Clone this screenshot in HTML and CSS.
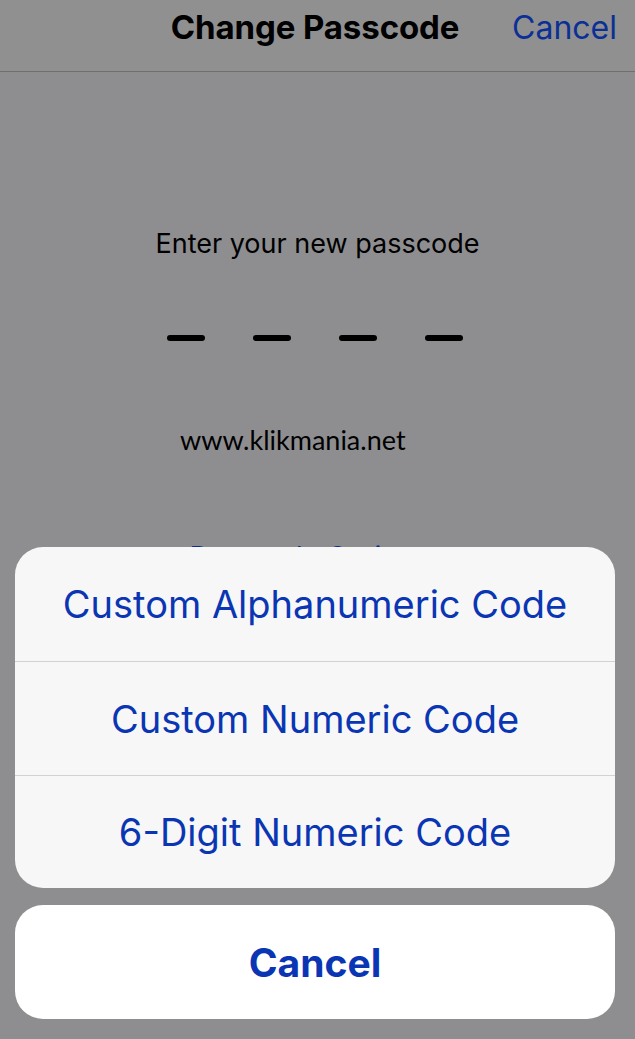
FILE: index.html
```html
<!DOCTYPE html>
<html>
<head>
<meta charset="utf-8">
<link rel="stylesheet" href="styles.css">
</head>
<body>
<div class="screen">
  <header class="navbar">
    <span></span>
    <h1 class="title">Change Passcode</h1>
    <a class="nav-cancel">Cancel</a>
  </header>
  <main class="content">
    <p class="prompt">Enter your new passcode</p>
    <div class="dashes">
      <span class="dash"></span><span class="dash"></span><span class="dash"></span><span class="dash"></span>
    </div>
    <p class="watermark">www.klikmania.net</p>
    <p class="options-link">Passcode Options</p>
  </main>
  <div class="sheet">
    <div class="sheet-group">
      <div class="sheet-item">Custom Alphanumeric Code</div>
      <div class="sheet-item">Custom Numeric Code</div>
      <div class="sheet-item">6-Digit Numeric Code</div>
    </div>
    <div class="sheet-cancel">Cancel</div>
  </div>
</div>
</body>
</html>
```
FILE: styles.css
```css
html, body {
  margin: 0;
  padding: 0;
  background: #8e8e90;
}
.screen {
  position: relative;
  width: 635px;
  height: 1039px;
  overflow: hidden;
  font-family: Inter, Roboto, "Liberation Sans", sans-serif;
}
.navbar {
  height: 72px;
  border-bottom: 1px solid #6f6f70;
  background: #909091;
  display: grid;
  grid-template-columns: 1fr auto 1fr;
  align-items: center;
  box-sizing: border-box;
  padding: 0 5px 17px 0;
}
.title {
  margin: 0;
  font-size: 33px;
  font-weight: 700;
  color: #000;
  letter-spacing: -0.1px;
}
.nav-cancel {
  justify-self: end;
  margin-right: 13px;
  font-size: 32px;
  color: #0b2f95;
}
.content {
  display: flex;
  flex-direction: column;
  align-items: center;
}
.prompt {
  margin: 155px 0 0;
  font-size: 27px;
  line-height: 34px;
  color: #000;
}
.dashes {
  display: flex;
  gap: 48px;
  margin-top: 74px;
  padding-right: 5px;
}
.dash {
  width: 38px;
  height: 6px;
  border-radius: 3px;
  background: #000;
}
.watermark {
  align-self: flex-start;
  margin: 82px 0 0 180px;
  font-family: Lato, "Open Sans", sans-serif;
  font-size: 27px;
  line-height: 34px;
  color: #000;
}
.options-link {
  margin: 83px 0 0;
  padding-right: 16px;
  font-size: 28px;
  color: #0b2f95;
}
.sheet {
  position: absolute;
  left: 15px;
  width: 600px;
  bottom: 20px;
  display: flex;
  flex-direction: column;
  gap: 17px;
}
.sheet-group {
  background: #f7f7f7;
  border-radius: 28px;
  overflow: hidden;
}
.sheet-item {
  box-sizing: border-box;
  height: 114px;
  display: flex;
  align-items: center;
  justify-content: center;
  font-size: 38px;
  color: #0a36b4;
  border-top: 1px solid #d2d2d4;
}
.sheet-item:first-child {
  border-top: none;
}
.sheet-item:last-child {
  height: 113px;
}
.sheet-cancel {
  height: 114px;
  background: #fff;
  border-radius: 28px;
  display: flex;
  align-items: center;
  justify-content: center;
  font-size: 39px;
  font-weight: 700;
  color: #0a36b4;
}
```
